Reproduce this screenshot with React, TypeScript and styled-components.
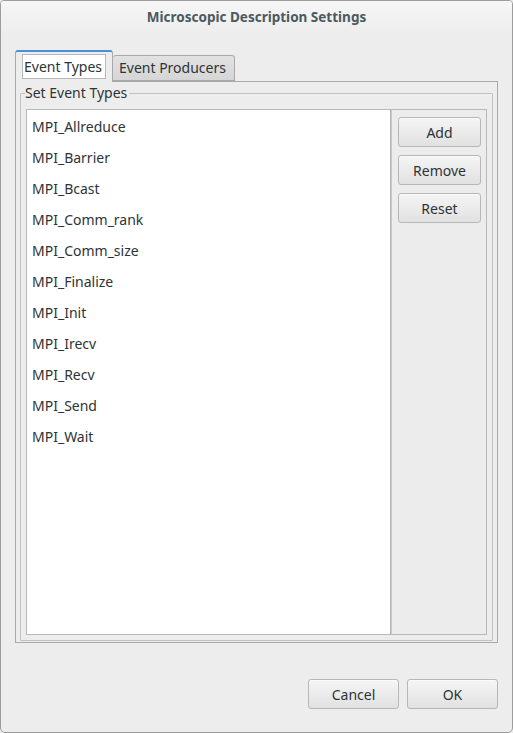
import React from "react";
import styled, { createGlobalStyle } from "styled-components";

const GlobalStyle = createGlobalStyle`
  html, body { margin: 0; padding: 0; background: #ededed; }
  * { box-sizing: border-box; }
  body { font-family: "Noto Sans", "Open Sans", sans-serif; font-size: 14px; color: #2e3436; }
`;

const Window = styled.div`
  width: 513px;
  height: 733px;
  display: flex;
  flex-direction: column;
  border: 1px solid #9c9c9c;
  border-radius: 4px 4px 5px 5px;
  background: #ededed;
  overflow: hidden;
`;

const TitleBar = styled.div`
  height: 33px;
  flex: none;
  display: flex;
  align-items: center;
  justify-content: center;
  padding-bottom: 2px;
  font-weight: bold;
  font-size: 13.5px;
  color: #4b5961;
  background: linear-gradient(#f6f6f6, #ededed);
`;

const Body = styled.div`
  flex: 1;
  display: flex;
  flex-direction: column;
  padding: 16px 14px 0 14px;
  min-height: 0;
`;

const TabRow = styled.div`
  display: flex;
  align-items: flex-end;
  height: 31px;
  flex: none;
  position: relative;
  z-index: 1;
`;

const Tab = styled.div<{ $active?: boolean }>`
  display: flex;
  align-items: center;
  border: 1px solid #a9a9a9;
  border-radius: 3px 3px 0 0;
  ${(p) =>
    p.$active
      ? `
    height: 32px;
    margin-bottom: -1px;
    width: 98px;
    padding: 2px 6px 3px 6px;
    border-top: 2px solid #4a90d9;
    border-bottom: none;
    background: #ededed;
    align-items: flex-start;
  `
      : `
    height: 26px;
    width: 122px;
    padding: 0 0 0 6px;
    border-left: none;
    background: linear-gradient(#e2e2e2, #d6d6d6);
  `}
`;

const TabLabel = styled.div<{ $focus?: boolean }>`
  font-size: 14px;
  white-space: nowrap;
  color: #2e3436;
  ${(p) =>
    p.$focus
      ? `
    background: #fff;
    border: 1px solid #b9b9b9;
    height: 25px;
    width: 85px;
    padding-left: 1px;
    line-height: 23px;
  `
      : `
    line-height: 24px;
  `}
`;

const Panel = styled.div`
  flex: 1;
  display: flex;
  flex-direction: column;
  border: 1px solid #a9a9a9;
  padding: 0 4px 1px 4px;
  min-height: 0;
`;

const Group = styled.fieldset`
  flex: 1;
  margin: 0;
  display: flex;
  min-height: 0;
  border: 1px solid #c2c2c2;
  padding: 5px 5px 5px 5px;
  border-radius: 1px;
`;

const Legend = styled.legend`
  padding: 0 2px 0 0;
  margin-left: -1px;
  font-size: 14px;
  line-height: 22px;
  color: #2e3436;
`;

const Content = styled.div`
  flex: 1;
  display: flex;
  min-height: 0;
`;

const List = styled.div`
  width: 365px;
  background: #fff;
  border: 1px solid #b8b8b8;
  padding: 1px 0 0 5px;
`;

const Item = styled.div`
  height: 31px;
  line-height: 31px;
  font-size: 14px;
  color: #2e3436;
`;

const Side = styled.div`
  width: 96px;
  border: 1px solid #b8b8b8;
  border-left-color: #c8c8c8;
  background: #ececec;
  padding: 7px 0 0 6px;
  display: flex;
  flex-direction: column;
  gap: 8px;
`;

const Button = styled.button<{ $w: number }>`
  width: ${(p) => p.$w}px;
  height: 30px;
  border: 1px solid #b7b7b7;
  border-radius: 3px;
  background: linear-gradient(#f5f5f5, #e1e1e1);
  font-family: "Noto Sans", "Open Sans", sans-serif;
  font-size: 14px;
  color: #2e3436;
  padding: 0;
  box-shadow: inset 0 1px 0 #fafafa;
`;

const Footer = styled.div`
  flex: none;
  display: flex;
  justify-content: flex-end;
  gap: 8px;
  padding: 36px 14px 23px 0;
`;

const items = [
  "MPI_Allreduce",
  "MPI_Barrier",
  "MPI_Bcast",
  "MPI_Comm_rank",
  "MPI_Comm_size",
  "MPI_Finalize",
  "MPI_Init",
  "MPI_Irecv",
  "MPI_Recv",
  "MPI_Send",
  "MPI_Wait",
];

export default function App() {
  return (
    <>
      <GlobalStyle />
      <Window>
        <TitleBar>Microscopic Description Settings</TitleBar>
        <Body>
          <TabRow>
            <Tab $active>
              <TabLabel $focus>Event Types</TabLabel>
            </Tab>
            <Tab>
              <TabLabel>Event Producers</TabLabel>
            </Tab>
          </TabRow>
          <Panel>
            <Group>
              <Legend>Set Event Types</Legend>
              <Content>
                <List>
                  {items.map((it) => (
                    <Item key={it}>{it}</Item>
                  ))}
                </List>
                <Side>
                  <Button $w={83}>Add</Button>
                  <Button $w={83}>Remove</Button>
                  <Button $w={83}>Reset</Button>
                </Side>
              </Content>
            </Group>
          </Panel>
        </Body>
        <Footer>
          <Button $w={91}>Cancel</Button>
          <Button $w={91}>OK</Button>
        </Footer>
      </Window>
    </>
  );
}
